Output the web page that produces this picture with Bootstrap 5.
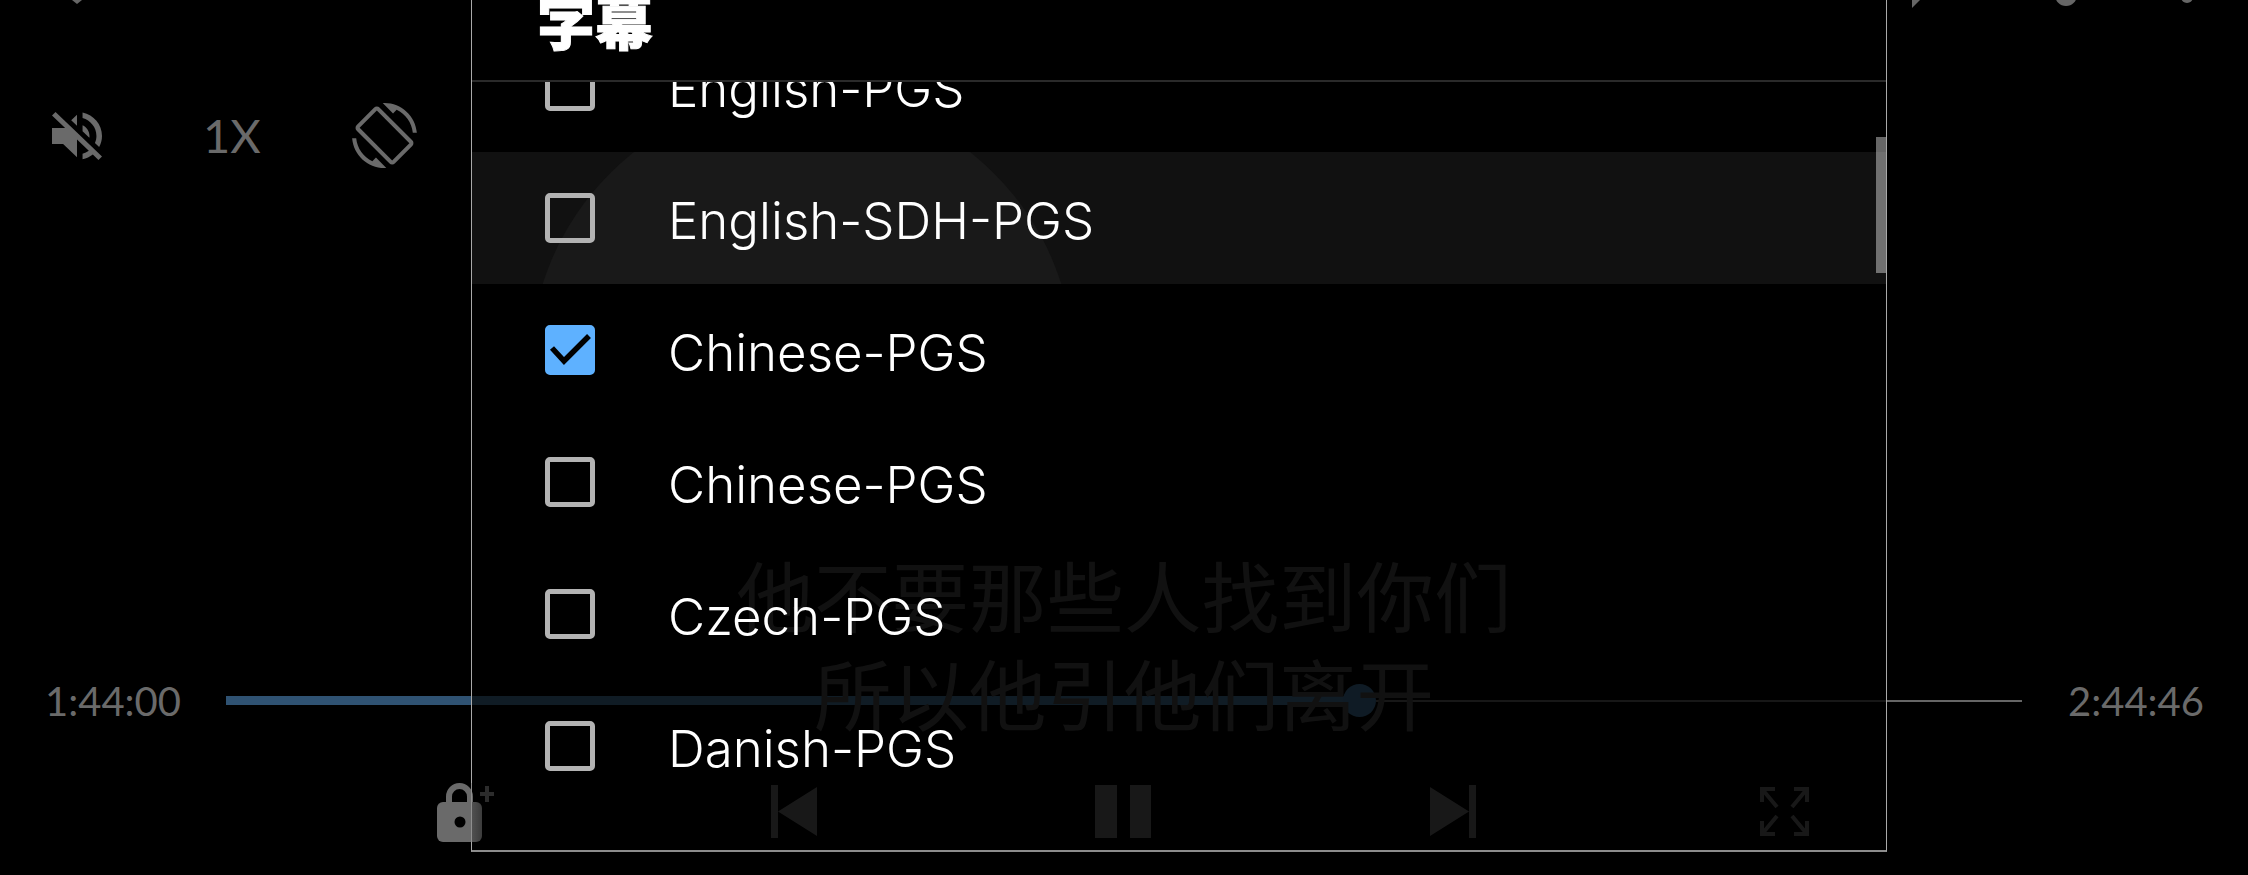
<!DOCTYPE html>
<html lang="zh">
<head>
<meta charset="utf-8">
<title>字幕</title>
<link href="https://cdn.jsdelivr.net/npm/bootstrap@5.3.0/dist/css/bootstrap.min.css" rel="stylesheet">
<style>
html,body{height:875px;overflow:hidden;background:#000}
body{font-family:"Lato","Noto Sans CJK SC",sans-serif}
.player{height:875px;width:2248px;overflow:hidden;color:#6a6a6a}
.top-strip{height:8px;display:block}
.tools{margin-top:95px;height:65px;padding-left:52px}
.speed{font-size:47px;line-height:1;margin-left:101px;width:57px;font-weight:400}
.rotate-ic{margin-left:92px}
.ic{fill:#6a6a6a;display:block}
.subtitle{top:544px;left:0;right:0;font:400 77.500px/98px "Noto Sans CJK SC",sans-serif;color:#4a4a4a;text-align:center;pointer-events:none}
.seek{margin-top:516px;height:33px;padding-left:45px;padding-right:43px}
.time{font-size:40px;line-height:1;font-weight:400;width:137px;white-space:nowrap}
.bar{margin-left:44px;flex:1 1 auto}
.fill{width:1120px;height:9px;background:linear-gradient(90deg,#2f5272 245px,#48789e 245px)}
.thumb{width:33px;height:33px;border-radius:50%;background:#41759f;flex:none;margin-left:-3px}
.rest{flex:1 1 auto;height:2px;background:#666}
.time-end{margin-left:46px}
.transport{margin-top:66px;padding-left:437px;height:59px}
.lock-ic{position:relative;z-index:3;flex:none}
.ml-prev{margin-left:277px;margin-top:2px}
.ml-pause{margin-left:278px;margin-top:2px}
.ml-next{margin-left:279px;margin-top:2px}
.ml-full{margin-left:284px;margin-top:4px}
.sheet{left:471px;top:-1px;width:1416px;height:853px;background:rgba(0,0,0,.77);border:1px solid #a9a9a9;border-bottom:2px solid #8c8c8c;z-index:2;overflow:hidden}
.sheet-head{height:82px;border-bottom:2px solid #2a2a2a;padding-left:65px;overflow:hidden;flex:none}
.sheet-title{font:900 58px/58px "Noto Sans CJK SC",sans-serif;color:#fff;margin:-9px 0 0;-webkit-text-stroke:1px #fff}
.sub-list{flex:1 1 auto;overflow:hidden;background:transparent}
.sub-row{height:132px;background:transparent;border:0;color:#fff;padding:0 0 0 73px;gap:73px;font-family:"Inter",sans-serif;font-size:51px;font-weight:300;position:relative;overflow:hidden;flex:none;border-radius:0!important}
.sub-row:first-child{margin-top:-62px}
.sub-row.hot{background:#111}
.ripple{position:absolute;left:58px;top:-58px;width:544px;height:544px;border-radius:50%;background:#191919}
.box{width:50px;height:50px;border:5px solid #b3b3b3;border-radius:5px;flex:none;position:relative}
.box.on{background:#5eb1ff;border-color:#5eb1ff}
.box svg{position:absolute;left:-5px;top:-5px}
.row-label{position:relative;line-height:1;white-space:nowrap;margin-top:4px}
.thumbbar{right:0;top:137px;width:10px;height:136px;background:rgba(255,255,255,.4)}
</style>
</head>
<body>
<div class="player d-flex flex-column position-relative">
  <svg class="top-strip" width="2248" height="8" viewBox="0 0 2248 8">
    <path d="M72 0h10l-5 4z" fill="#666"/>
    <path d="M1912 0h8l-8 8z" fill="#666"/>
    <circle cx="2066" cy="-5" r="11" fill="#666"/>
    <circle cx="2187" cy="-3" r="6" fill="#666"/>
  </svg>
  <div class="tools d-flex align-items-center">
    <svg class="ic" width="50" height="48" viewBox="3 3 18 18" preserveAspectRatio="none"><path d="M16.5 12c0-1.77-1.02-3.29-2.5-4.03v2.21l2.45 2.45c.03-.2.05-.41.05-.63zm2.5 0c0 .94-.2 1.82-.54 2.64l1.51 1.51C20.63 14.91 21 13.5 21 12c0-4.28-2.99-7.86-7-8.77v2.06c2.89.86 5 3.54 5 6.71zM4.27 3L3 4.27 7.73 9H3v6h4l5 5v-6.73l4.25 4.25c-.67.52-1.42.93-2.25 1.18v2.06c1.38-.31 2.63-.95 3.69-1.81L19.73 21 21 19.73l-9-9L4.27 3zM12 4L9.91 6.09 12 8.18V4z"/></svg>
    <span class="speed">1X</span>
    <svg class="ic rotate-ic" width="65" height="65" viewBox="0 0 24 24"><path d="M16.48 2.52c3.27 1.55 5.61 4.72 5.97 8.48h1.5C23.44 4.84 18.29 0 12 0l-.66.03 3.81 3.81 1.33-1.32zm-6.25-.77c-.59-.59-1.54-.59-2.12 0L1.75 8.11c-.59.59-.59 1.54 0 2.12l12.02 12.02c.59.59 1.54.59 2.12 0l6.36-6.36c.59-.59.59-1.54 0-2.12L10.23 1.75zm4.6 19.44L2.81 9.17l6.36-6.36 12.02 12.02-6.36 6.36zm-7.31.29C4.25 19.94 1.91 16.76 1.55 13H.05C.56 19.16 5.71 24 12 24l.66-.03-3.81-3.81-1.33 1.32z"/></svg>
  </div>
  <div class="subtitle position-absolute">他不要那些人找到你们<br>所以他引他们离开</div>
  <div class="seek d-flex align-items-center">
    <span class="time">1:44:00</span>
    <div class="bar d-flex align-items-center">
      <div class="fill"></div>
      <div class="thumb"></div>
      <div class="rest"></div>
    </div>
    <span class="time time-end">2:44:46</span>
  </div>
  <div class="transport d-flex align-items-start">
    <svg class="lock-ic" width="57" height="59" viewBox="0 0 57 59">
      <defs><linearGradient id="lk" gradientUnits="userSpaceOnUse" x1="0" y1="0" x2="45" y2="0">
        <stop offset="0" stop-color="#6a6a6a"/><stop offset=".75" stop-color="#6a6a6a"/><stop offset=".76" stop-color="#525252"/><stop offset="1" stop-color="#3c3c3c"/>
      </linearGradient></defs>
      <path d="M12 22V13.5a10.500 10.500 0 0 1 21 0V22" fill="none" stroke="#6a6a6a" stroke-width="6"/>
      <rect x="0" y="19" width="45" height="40" rx="6" fill="url(#lk)"/>
      <circle cx="23" cy="39" r="5.500" fill="#000"/>
      <path d="M50 3v16M43 11h14" stroke="#2c2c2c" stroke-width="4"/>
      <rect x="34" y="0" width="1" height="59" fill="#8f8f8f"/>
    </svg>
    <svg class="ic ml-prev" width="46" height="53" viewBox="0 0 46 53"><path d="M0 0h7v53H0zM46 2v49L7 26.500z"/></svg>
    <svg class="ic ml-pause" width="56" height="53" viewBox="0 0 56 53"><path d="M0 0h22v53H0zM35 0h21v53H35z"/></svg>
    <svg class="ic ml-next" width="46" height="53" viewBox="0 0 46 53"><path d="M39 0h7v53h-7zM0 2v49l39-24.500z"/></svg>
    <svg class="ml-full" width="49" height="49" viewBox="0 0 49 49" fill="none" stroke="#6a6a6a" stroke-width="4"><path d="M2 15V2h13M2 2l15 18M47 15V2H34M47 2L32 20M2 34v13h13M2 47l15-18M47 34v13H34M47 47L32 29"/></svg>
  </div>

  <section class="sheet position-absolute d-flex flex-column">
    <header class="sheet-head"><h5 class="sheet-title">字幕</h5></header>
    <ul class="list-group list-group-flush sub-list">
      <li class="list-group-item d-flex align-items-center sub-row"><span class="box"></span><span class="row-label">English-PGS</span></li>
      <li class="list-group-item d-flex align-items-center sub-row hot"><span class="ripple"></span><span class="box"></span><span class="row-label">English-SDH-PGS</span></li>
      <li class="list-group-item d-flex align-items-center sub-row"><span class="box on"><svg width="50" height="50" viewBox="0 0 50 50"><path d="M7 23l12 13L44 11" fill="none" stroke="#000" stroke-width="5.500"/></svg></span><span class="row-label">Chinese-PGS</span></li>
      <li class="list-group-item d-flex align-items-center sub-row"><span class="box"></span><span class="row-label">Chinese-PGS</span></li>
      <li class="list-group-item d-flex align-items-center sub-row"><span class="box"></span><span class="row-label">Czech-PGS</span></li>
      <li class="list-group-item d-flex align-items-center sub-row"><span class="box"></span><span class="row-label">Danish-PGS</span></li>
    </ul>
    <div class="thumbbar position-absolute"></div>
  </section>
</div>
<script src="https://cdn.jsdelivr.net/npm/bootstrap@5.3.0/dist/js/bootstrap.bundle.min.js"></script>
</body>
</html>
